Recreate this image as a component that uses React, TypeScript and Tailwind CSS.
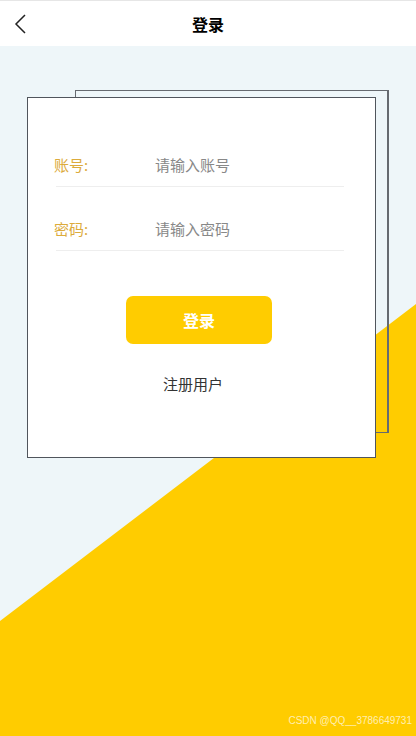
import React from "react";

const cjk = { fontFamily: '"Noto Sans CJK SC", "Noto Sans", sans-serif' };

function Field({ label, placeholder }: { label: string; placeholder: string }) {
  return (
    <div className="flex h-[42px] items-center border-b border-[#eeeeee]">
      <span className="w-[101px] -ml-[2px] text-[15px] text-[#dcab3c]">{label}:</span>
      <span className="text-[15px] text-[#888888]">{placeholder}</span>
    </div>
  );
}

export default function App() {
  return (
    <div className="relative h-[736px] w-[416px] overflow-hidden bg-[#eef6f9]" style={cjk}>
      {/* yellow diagonal backdrop */}
      <div className="absolute inset-0 bg-[#ffcc00] [clip-path:polygon(0_621px,100%_304px,100%_100%,0_100%)]" />

      {/* header */}
      <div className="relative flex h-[46px] items-center justify-center border-t border-[#e6e6e6] bg-white">
        <svg className="absolute left-[13px] top-[12px]" width="16" height="22" viewBox="0 0 16 22" fill="none">
          <path d="M12 2 L3 11 L12 20" stroke="#222" strokeWidth="1.5" />
        </svg>
        <span className="text-[16px] font-bold text-black">登录</span>
      </div>

      {/* cards */}
      <div className="relative ml-[27px] mt-[51px] w-[349px]">
        <div className="absolute left-[48px] top-[-7px] h-[343px] w-[314px] border border-[#666a70] border-r-2" />
        <div className="relative flex h-[361px] flex-col border border-[#50555c] bg-white pl-[28px] pr-[31px] pt-[47px]">
          <Field label="账号" placeholder="请输入账号" />
          <div className="mt-[22px]">
            <Field label="密码" placeholder="请输入密码" />
          </div>
          <div className="mt-[45px] flex justify-center pr-[2px]">
            <button className="h-[48px] w-[146px] rounded-[7px] bg-[#ffcc00] text-[16px] font-bold text-white">
              登录
            </button>
          </div>
          <div className="mt-[30px] text-center pr-[14px] text-[15px] leading-[20px] text-[#333333]">注册用户</div>
        </div>
      </div>

      <div
        className="absolute bottom-[8px] right-[4px] text-[10px] text-white/70"
        style={{ fontFamily: '"Liberation Sans", Arial, sans-serif' }}
      >
        CSDN @QQ__3786649731
      </div>
    </div>
  );
}
